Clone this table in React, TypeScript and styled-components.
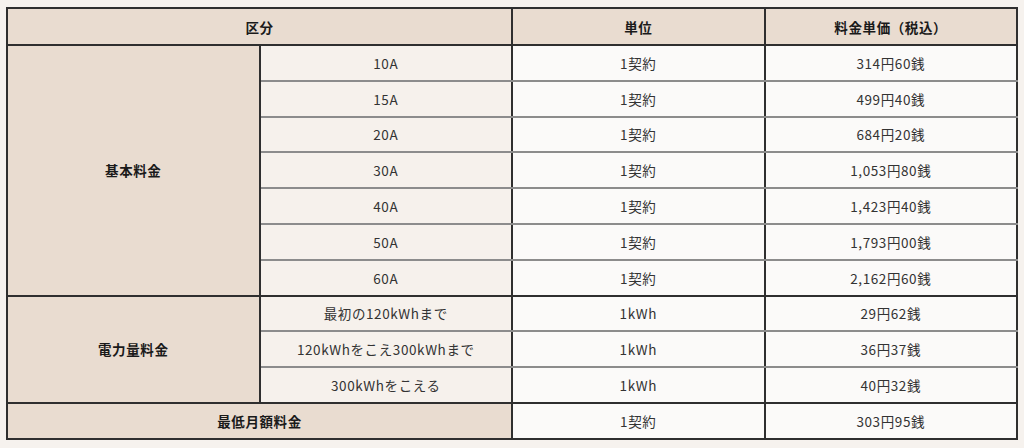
import styled, { createGlobalStyle } from "styled-components";

const GlobalStyle = createGlobalStyle`
  body {
    margin: 0;
    background: #f6f2ee;
    font-family: "Noto Sans CJK JP", "Noto Sans", sans-serif;
  }
`;

const Page = styled.div`
  padding: 7px 6px 0 6px;
`;

const Table = styled.table`
  width: 1012px;
  border-collapse: collapse;
  border: 2px solid #2f2f2f;
  table-layout: fixed;
  font-size: 13.5px;
  letter-spacing: 0.6px;
  color: #333;
`;

const Th = styled.th`
  height: 35px;
  background: #e9dcd0;
  border: 2px solid #2f2f2f;
  font-weight: 700;
  color: #1a1a1a;
  text-align: center;
  padding: 0;
`;

const Label = styled.td`
  background: #e9dcd0;
  border: 2px solid #2f2f2f;
  font-weight: 700;
  color: #1a1a1a;
  text-align: center;
  padding: 0;
`;

const Cell = styled.td<{ $sub?: boolean; $top?: boolean; $bottom?: boolean }>`
  height: 33.8px;
  padding: 0;
  text-align: center;
  background: ${(p) => (p.$sub ? "#f6f1ec" : "#fbfaf9")};
  border-left: 2px solid #2f2f2f;
  border-right: 2px solid #2f2f2f;
  border-top: 2px solid ${(p) => (p.$top ? "#2f2f2f" : "#8c8c8c")};
  border-bottom: 2px solid ${(p) => (p.$bottom ? "#2f2f2f" : "#8c8c8c")};
`;

const basic = [
  ["10A", "314円60銭"],
  ["15A", "499円40銭"],
  ["20A", "684円20銭"],
  ["30A", "1,053円80銭"],
  ["40A", "1,423円40銭"],
  ["50A", "1,793円00銭"],
  ["60A", "2,162円60銭"],
];

const energy = [
  ["最初の120kWhまで", "29円62銭"],
  ["120kWhをこえ300kWhまで", "36円37銭"],
  ["300kWhをこえる", "40円32銭"],
];

const App = () => {
  return (
    <Page>
      <GlobalStyle />
      <Table>
        <thead>
          <tr>
            <Th colSpan={2}>区分</Th>
            <Th>単位</Th>
            <Th>料金単価（税込）</Th>
          </tr>
        </thead>
        <tbody>
          {basic.map(([amp, price], i) => (
            <tr key={amp}>
              {i === 0 && <Label rowSpan={basic.length}>基本料金</Label>}
              <Cell $sub $top={i === 0} $bottom={i === basic.length - 1}>
                {amp}
              </Cell>
              <Cell $top={i === 0} $bottom={i === basic.length - 1}>
                1契約
              </Cell>
              <Cell $top={i === 0} $bottom={i === basic.length - 1}>
                {price}
              </Cell>
            </tr>
          ))}
          {energy.map(([range, price], i) => (
            <tr key={range}>
              {i === 0 && <Label rowSpan={energy.length}>電力量料金</Label>}
              <Cell $sub $top={i === 0} $bottom={i === energy.length - 1}>
                {range}
              </Cell>
              <Cell $top={i === 0} $bottom={i === energy.length - 1}>
                1kWh
              </Cell>
              <Cell $top={i === 0} $bottom={i === energy.length - 1}>
                {price}
              </Cell>
            </tr>
          ))}
          <tr>
            <Label colSpan={2}>最低月額料金</Label>
            <Cell $top $bottom>
              1契約
            </Cell>
            <Cell $top $bottom>
              303円95銭
            </Cell>
          </tr>
        </tbody>
      </Table>
    </Page>
  );
};

export default App;
